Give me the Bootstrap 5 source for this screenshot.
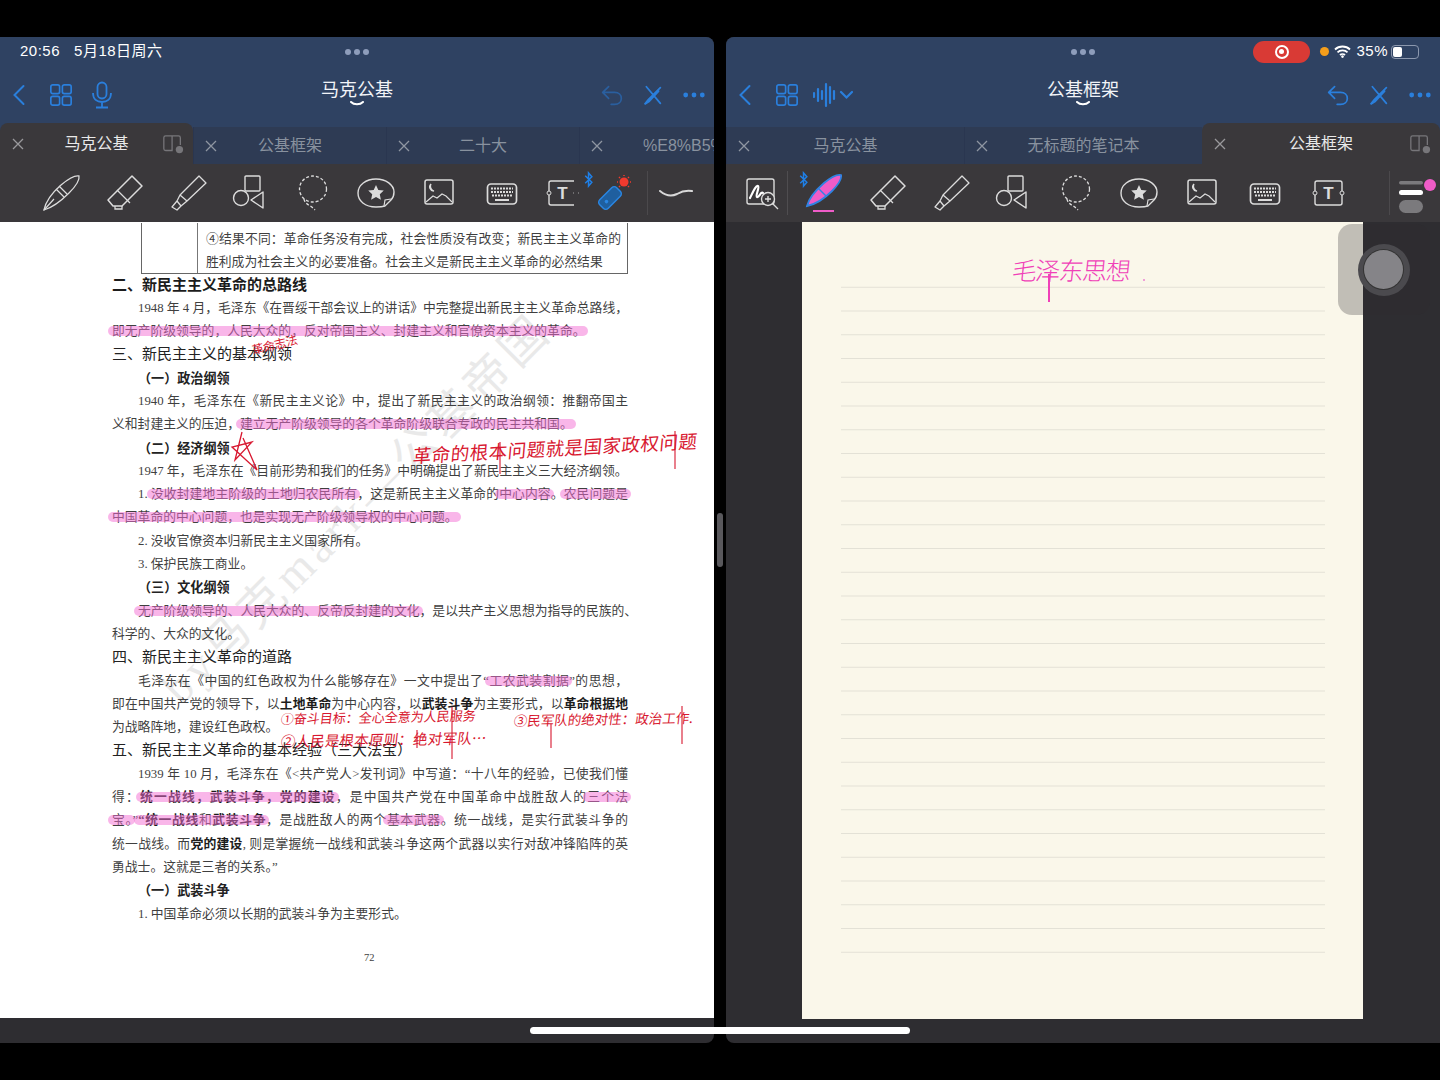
<!DOCTYPE html>
<html lang="zh-CN">
  <head>
    <meta charset="UTF-8" />
    <meta name="viewport" content="width=device-width, initial-scale=1" />
    <link href="https://cdn.jsdelivr.net/npm/bootstrap@5.3.3/dist/css/bootstrap.min.css" rel="stylesheet" />
    <script src="https://cdn.jsdelivr.net/npm/bootstrap@5.3.3/dist/js/bootstrap.bundle.min.js" defer></script>
    <style>
      /* Screen and split panes */
      body {
        background: #000;
        font-family: "Liberation Sans", "Noto Sans CJK SC", sans-serif;
        overflow: hidden;
      }
      .screen { position: relative; width: 1440px; height: 1080px; padding: 37px 0; gap: 12px; }
      .pane { width: 714px; height: 1006px; background: #2e2d31; overflow: hidden; }
      .pane-left { border-radius: 0 8px 8px 0; }
      .pane-right { border-radius: 8px 0 0 8px; }

      /* Navy header */
      .head { background: #2f4262; color: #fff; }
      .status-row { height: 28px; padding: 1px 20px 0; font-size: 15px; letter-spacing: .5px; display: grid; grid-template-columns: 1fr auto 1fr; align-items: center; }
      .dots-top { display: flex; gap: 3px; }
      .dots-top i { width: 6px; height: 6px; border-radius: 50%; background: #8e9dbb; }
      .nav-row { height: 58px; padding: 2px 8px 0; display: grid; grid-template-columns: 1fr auto 1fr; align-items: center; color: #2a7fdc; }
      .doc-title { color: #f2f4f8; font-size: 18px; line-height: 20px; text-align: center; margin-top: -3px; }
      .doc-title svg { display: block; margin: 1px auto 0; }
      .nav-group { display: flex; align-items: center; }
      .dim-blue { color: #2a5f9f; }

      /* Tabs */
      .tab-row { height: 41px; display: flex; }
      .pad-tab { position: relative; flex: none; margin-top: 4px; background: #2e3b54; color: #89929f; font-size: 16px; line-height: 37px; text-align: center; white-space: nowrap; overflow: hidden; border-left: 1px solid #2a3650; }
      .pad-tab.is-on { margin-top: 0; line-height: 41px; background: #3a383b; color: #e9e9e9; border: 0; border-radius: 8px 8px 0 0; }
      .tab-x { position: absolute; left: 11px; top: 50%; margin-top: -6px; width: 12px; height: 12px; color: #8f96a2; display: block; }
      .is-on .tab-x { left: 12px; color: #9a999c; }
      .tab-split { position: absolute; right: 9px; top: 11px; color: #77767a; }

      /* Tool bar */
      .tools { height: 58px; background: #3a383b; color: #dcdcdc; display: flex; align-items: center; position: relative; overflow: hidden; }
      .tool { flex: none; width: 40px; height: 40px; margin-right: 23px; }
      .tool-sep { flex: none; width: 1px; height: 44px; background: #4b494c; }
      .ble { position: absolute; color: #1f7fe6; }

      /* PDF page */
      .page-sheet { position: relative; height: 796px; background: #fff; overflow: hidden; padding: 1px 0 0 112px; font-family: "Liberation Serif", "Noto Sans CJK SC", serif; font-size: 12.8px; color: #3f3f3f; }
      .ln { width: 516px; height: 23.3px; line-height: 23.3px; white-space: nowrap; text-align: justify; text-align-last: justify; }
      .ln.last { text-align: left; text-align-last: left; }
      .ln.ind { padding-left: 26px; }
      .ln.sec-a { font-size: 15px; color: #222; }
      .ln.sec-b { padding-left: 26px; font-size: 13.1px; font-weight: 700; color: #222; }
      .ln b { color: #1c1c1c; }
      .hl { position: relative; }
      .hl::before { content: ""; position: absolute; left: -4px; right: -3px; top: 2px; bottom: 2px; border-radius: 7px; background: rgba(243, 110, 212, .5); }
      .old-table { margin-left: 29px; width: 487px; height: 50.500px; display: flex; border: 1px solid #666; border-top: 0; }
      .old-table > div:first-child { width: 56px; border-right: 1px solid #777; flex: none; }
      .old-cell { padding: 5px 6px 0 8px; flex: 1; min-width: 0; }
      .old-cell .ln { width: 100%; height: 23px; line-height: 23px; }
      .page-no { margin-top: 24px; width: 516px; padding-left: 252px; font-size: 10.500px; }
      .water { position: absolute; left: 57px; top: 262px; width: 600px; text-align: center; font-size: 46px; line-height: 50px; letter-spacing: 5px; color: #e9e9e9; transform: rotate(-45deg); white-space: nowrap; }
      .ink { position: absolute; color: #d81830; white-space: nowrap; font-family: "Noto Sans CJK SC", sans-serif; font-weight: 400; line-height: 1; transform-origin: left center; }
      .ink-a { left: 252px; top: 122px; font-size: 12px; letter-spacing: -.5px; transform: rotate(-14deg); }
      .ink-b { left: 413px; top: 224px; font-size: 18.5px; letter-spacing: .5px; transform: rotate(-3deg) skewX(-8deg); }
      .ink-c { left: 281px; top: 490px; font-size: 13px; transform: rotate(-1deg) skewX(-8deg); }
      .ink-d { left: 281px; top: 512px; font-size: 14.5px; letter-spacing: .2px; transform: rotate(-1deg) skewX(-8deg); }
      .ink-e { left: 514px; top: 492px; font-size: 13.5px; transform: rotate(-1deg) skewX(-8deg); }
      .ink-mark { position: absolute; color: #d81830; fill: none; stroke: currentColor; }

      /* Ruled paper */
      .paper-zone { height: 797px; padding-left: 76px; }
      .paper { position: relative; width: 561px; height: 797px; background: #faf7ea; padding: 42px 38px 0 39px; }
      .rules { height: 689px; background: linear-gradient(to bottom, transparent 23px, #e3e1d6 23px) 0 0 / 100% 23.75px; }
      .pink-ink { position: absolute; left: 210px; top: 35px; color: #f040b8; font-family: "Noto Sans CJK SC", sans-serif; font-weight: 300; font-size: 25px; line-height: 1; letter-spacing: -1.500px; transform: skewX(-6deg); white-space: nowrap; }
      .pink-dot { position: absolute; left: 341px; top: 57px; width: 2px; height: 2px; background: #f0a0d8; }
      .pink-stem { position: absolute; left: 246px; top: 52px; width: 1.500px; height: 28px; background: #f040b8; }

      /* Things over the panes */
      .touch-pad { position: absolute; left: 1338px; top: 224px; width: 92px; height: 91px; border-radius: 14px; background: rgba(45, 44, 48, .28); display: flex; align-items: center; justify-content: center; }
      .touch-ring { width: 52px; height: 52px; border-radius: 50%; background: #4b4a4e; display: flex; align-items: center; justify-content: center; margin-left: -1px; }
      .touch-knob { width: 39px; height: 39px; border-radius: 50%; background: #858488; box-shadow: 0 0 0 1px #333; }
      .split-grip { position: absolute; left: 717px; top: 513px; width: 6px; height: 54px; border-radius: 3px; background: #59585c; }
      .home-bar { position: absolute; left: 530px; top: 1027px; width: 380px; height: 7px; border-radius: 4px; background: #fff; }
      .rec-pill { width: 57px; height: 22px; border-radius: 11px; background: #d93a35; display: flex; align-items: center; justify-content: center; }
      .rec-pill i { width: 14px; height: 14px; border-radius: 50%; border: 2px solid #fff; display: flex; align-items: center; justify-content: center; }
      .rec-pill i::after { content: ""; width: 5px; height: 5px; border-radius: 50%; background: #fff; }
      .orange-dot { width: 9px; height: 9px; border-radius: 50%; background: #f59e1b; margin-left: 10px; }
      .batt { width: 28px; height: 14px; border: 1px solid #8c98ae; border-radius: 4px; padding: 1px; margin-left: 3px; margin-right: 1px; }
      .batt i { display: block; width: 9px; height: 100%; background: #fff; border-radius: 2px; }
    </style>
  </head>

  <body>
    <svg width="0" height="0" style="position:absolute">
      <defs>
        <symbol id="i-pen" viewBox="0 0 40 40"><path d="M3 37C5 27 12 19 20 12 26 7 33 2 38 3c1 5-4 11-10 17C21 27 13 34 3 37Z" fill="none" stroke="currentColor" stroke-width="1.3"/><path d="M15 16l8 8M18 13l8 8M3 37l10-11" fill="none" stroke="currentColor" stroke-width="1.2"/></symbol>
        <symbol id="i-eraser" viewBox="0 0 40 40"><path d="M28 3l10 10-20 20H9l-5-6Z" fill="none" stroke="currentColor" stroke-width="1.5" stroke-linejoin="round"/><path d="M13 17l13 13M11 33v3h7v-3" fill="none" stroke="currentColor" stroke-width="1.3"/></symbol>
        <symbol id="i-mark" viewBox="0 0 40 40"><path d="M32 3l7 7-19 18-7-6ZM13 22l-3 6 4 5 6-5M10 28l-5 6 5 3 4-4" fill="none" stroke="currentColor" stroke-width="1.3" stroke-linejoin="round"/></symbol>
        <symbol id="i-shapes" viewBox="0 0 40 40"><rect x="15" y="3" width="15" height="15" rx="1" fill="none" stroke="currentColor" stroke-width="1.4"/><circle cx="11" cy="25" r="7.5" fill="none" stroke="currentColor" stroke-width="1.4"/><path d="M33 19v16l-12-8Z" fill="none" stroke="currentColor" stroke-width="1.4" stroke-linejoin="round"/></symbol>
        <symbol id="i-lasso" viewBox="0 0 40 40"><ellipse cx="20" cy="16" rx="13.5" ry="13" fill="none" stroke="currentColor" stroke-width="1.3" stroke-dasharray="3 2"/><path d="M11 26c1 6 7 6 11 11" fill="none" stroke="currentColor" stroke-width="1.3" stroke-dasharray="3 2"/></symbol>
        <symbol id="i-sticker" viewBox="0 0 40 40"><path d="M20 6c10 0 18 6 18 13 0 3-1 6-3 8l-6 6c-3 1-6 1-9 1C9 34 2 28 2 20S10 6 20 6Z" fill="none" stroke="currentColor" stroke-width="1.4"/><path d="M35 26l-6 1-1 6" fill="none" stroke="currentColor" stroke-width="1.2"/><path d="M20 12l2.300 5 5.500.6-4 3.700 1.100 5.400-4.900-2.800-4.900 2.800 1.100-5.400-4-3.700 5.500-.6Z" fill="currentColor"/></symbol>
        <symbol id="i-image" viewBox="0 0 40 40"><rect x="6" y="7" width="28" height="24" rx="2" fill="none" stroke="currentColor" stroke-width="1.5"/><path d="M12 11a4 4 0 0 0 3 7 5 5 0 0 1-3-7ZM7 29l7-6 4 2 5-4 4 2 6 6" fill="none" stroke="currentColor" stroke-width="1.200"/></symbol>
        <symbol id="i-keys" viewBox="0 0 40 40"><rect x="5.500" y="11" width="29" height="20" rx="3.500" fill="none" stroke="currentColor" stroke-width="1.700"/><path d="M9 15.500h22M9 19h22M10 22.500h20" stroke="currentColor" stroke-width="2" stroke-dasharray="2 1"/><path d="M13 27h14" stroke="currentColor" stroke-width="2"/></symbol>
        <symbol id="i-text" viewBox="0 0 40 40"><rect x="7" y="8" width="27" height="24" rx="2" fill="none" stroke="currentColor" stroke-width="1.400"/><circle cx="7" cy="20" r="2" fill="#3a383b" stroke="currentColor"/><circle cx="34" cy="20" r="2" fill="#3a383b" stroke="currentColor"/><text x="20.500" y="26" font-family="Liberation Sans" font-weight="700" font-size="17" fill="currentColor" text-anchor="middle">T</text></symbol>
        <symbol id="i-back" viewBox="0 0 20 28"><path d="M15 4L5 14l10 10" fill="none" stroke="currentColor" stroke-width="2.200" stroke-linecap="round"/></symbol>
        <symbol id="i-grid" viewBox="0 0 26 26"><g fill="none" stroke="currentColor" stroke-width="1.800"><rect x="2" y="2" width="9.500" height="9.500" rx="2"/><rect x="14.500" y="2" width="9.500" height="9.500" rx="2"/><rect x="2" y="14.500" width="9.500" height="9.500" rx="2"/><rect x="14.500" y="14.500" width="9.500" height="9.500" rx="2"/></g></symbol>
        <symbol id="i-undo" viewBox="0 0 28 26"><path d="M10 3L3 10l7 7M3 10h14c5 0 8 3 8 7s-3 7-8 7h-4" fill="none" stroke="currentColor" stroke-width="2" stroke-linecap="round" stroke-linejoin="round"/></symbol>
        <symbol id="i-cross" viewBox="0 0 24 24"><path d="M5 2l16 19M21 3L7 17l-4 5 5-3L19 7" fill="none" stroke="currentColor" stroke-width="2" stroke-linecap="round"/></symbol>
        <symbol id="i-more" viewBox="0 0 26 8"><circle cx="4" cy="4" r="2.600" fill="currentColor"/><circle cx="13" cy="4" r="2.600" fill="currentColor"/><circle cx="22" cy="4" r="2.600" fill="currentColor"/></symbol>
        <symbol id="i-x" viewBox="0 0 12 12"><path d="M1 1l10 10M11 1L1 11" stroke="currentColor" stroke-width="1.300"/></symbol>
        <symbol id="i-split" viewBox="0 0 24 24"><path d="M11 2H4a2 2 0 0 0-2 2v12a2 2 0 0 0 2 2h7ZM11 2h7a2 2 0 0 1 2 2v8" fill="none" stroke="currentColor" stroke-width="1.400"/><circle cx="19" cy="17" r="4" fill="currentColor"/></symbol>
        <symbol id="i-chev" viewBox="0 0 14 6"><path d="M1 1c3 3 9 3 12 0" fill="none" stroke="currentColor" stroke-width="2" stroke-linecap="round"/></symbol>
        <symbol id="i-ble" viewBox="0 0 10 18"><path d="M1 5l7 7-3.500 4V2L8 6l-7 7" fill="none" stroke="currentColor" stroke-width="1.600"/></symbol>
      </defs>
    </svg>

    <div class="screen d-flex">
      <!-- left pane: PDF -->
      <section class="pane pane-left">
        <div class="head">
          <div class="status-row">
            <div>20:56&nbsp;&nbsp;&nbsp;5月18日周六</div>
            <div class="dots-top"><i></i><i></i><i></i></div>
            <div></div>
          </div>
          <div class="nav-row">
            <div class="nav-group">
              <svg width="18" height="26" style="margin-left:2px"><use href="#i-back"/></svg>
              <svg width="24" height="24" style="margin-left:21px"><use href="#i-grid"/></svg>
              <svg width="24" height="28" viewBox="0 0 24 28" style="margin-left:17px"><rect x="7.500" y="1.500" width="9" height="16" rx="4.500" fill="none" stroke="currentColor" stroke-width="1.800"/><path d="M3 12c0 6 4 9 9 9s9-3 9-9M12 21v5M6 26.500h12" fill="none" stroke="currentColor" stroke-width="1.800"/></svg>
            </div>
            <div class="doc-title">马克公基<svg width="14" height="6" class="text-white"><use href="#i-chev"/></svg></div>
            <div class="nav-group justify-content-end">
              <svg width="24" height="22" class="dim-blue"><use href="#i-undo"/></svg>
              <svg width="21" height="21" style="margin-left:18px"><use href="#i-cross"/></svg>
              <svg width="24" height="8" style="margin-left:19px"><use href="#i-more"/></svg>
            </div>
          </div>
          <div class="tab-row">
            <div class="pad-tab is-on" style="width:193px"><svg class="tab-x"><use href="#i-x"/></svg>马克公基<svg class="tab-split" width="22" height="22"><use href="#i-split"/></svg></div>
            <div class="pad-tab" style="width:193px"><svg class="tab-x"><use href="#i-x"/></svg>公基框架</div>
            <div class="pad-tab" style="width:193px"><svg class="tab-x"><use href="#i-x"/></svg>二十大</div>
            <div class="pad-tab" style="width:135px;padding-left:63px;text-align:left"><svg class="tab-x"><use href="#i-x"/></svg>%E8%B5%84</div>
          </div>
        </div>
        <div class="tools" style="padding-left:41px">
          <svg class="tool"><use href="#i-pen"/></svg>
          <svg class="tool"><use href="#i-eraser"/></svg>
          <svg class="tool"><use href="#i-mark"/></svg>
          <svg class="tool"><use href="#i-shapes"/></svg>
          <svg class="tool"><use href="#i-lasso"/></svg>
          <svg class="tool"><use href="#i-sticker"/></svg>
          <svg class="tool"><use href="#i-image"/></svg>
          <svg class="tool"><use href="#i-keys"/></svg>
          <svg class="tool" style="margin-right:-8px;margin-left:-3px"><use href="#i-text"/></svg>
          <div class="tool-sep" style="background:#3a383b;width:4px;position:relative"></div>
          <svg class="ble" width="10" height="17" style="left:584px;top:7px"><use href="#i-ble"/></svg>
          <svg width="36" height="36" viewBox="0 0 36 36" style="margin-left:18px;flex:none">
            <g transform="rotate(-45 14 23)"><rect x="2" y="17" width="24" height="12" rx="3.500" fill="#1f5f9f" stroke="#2a86e2" stroke-width="1.500"/><circle cx="9" cy="23" r="1.800" fill="#2a86e2"/></g>
            <circle cx="28" cy="7" r="4.500" fill="#f03a2e"/>
            <path d="M28 0v1M21 7h1M34 7h1M23 2l1 1M33 2l-1 1M23 12l1-1M33 12l-1-1" stroke="#f03a2e" stroke-width="1.500"/>
          </svg>
          <div class="tool-sep" style="margin-left:15px"></div>
          <svg width="34" height="10" viewBox="0 0 34 10" style="margin-left:11px;flex:none"><path d="M1 3c6 5 11 6 17 3 5-3 9-4 15-3" fill="none" stroke="#d8d8d8" stroke-width="2" stroke-linecap="round"/></svg>
        </div>
        <div class="page-sheet">
          <div class="water">by马克mark—公基帝国</div>
          <div style="position:relative">
            <div class="old-table">
              <div></div>
              <div class="old-cell">
                <div class="ln">④结果不同：革命任务没有完成，社会性质没有改变；新民主主义革命的</div>
                <div class="ln last">胜利成为社会主义的必要准备。社会主义是新民主主义革命的必然结果</div>
              </div>
            </div>
            <div class="ln sec-a last"><b>二、新民主主义革命的总路线</b></div>
            <div class="ln ind">1948 年 4 月，毛泽东《在晋绥干部会议上的讲话》中完整提出新民主主义革命总路线，</div>
            <div class="ln last"><span class="hl">即无产阶级领导的，人民大众的，反对帝国主义、封建主义和官僚资本主义的革命。</span></div>
            <div class="ln sec-a last">三、新民主主义的基本纲领</div>
            <div class="ln sec-b last">（一）政治纲领</div>
            <div class="ln ind">1940 年，毛泽东在《新民主主义论》中，提出了新民主主义的政治纲领：推翻帝国主</div>
            <div class="ln last">义和封建主义的压迫，<span class="hl">建立无产阶级领导的各个革命阶级联合专政的民主共和国。</span></div>
            <div class="ln sec-b last">（二）经济纲领</div>
            <div class="ln ind last">1947 年，毛泽东在《目前形势和我们的任务》中明确提出了新民主主义三大经济纲领。</div>
            <div class="ln ind">1. <span class="hl">没收封建地主阶级的土地归农民所有</span>，这是新民主主义革命的<span class="hl">中心内容</span>。<span class="hl">农民问题是</span></div>
            <div class="ln last"><span class="hl">中国革命的中心问题，也是实现无产阶级领导权的中心问题。</span></div>
            <div class="ln ind last">2. 没收官僚资本归新民主主义国家所有。</div>
            <div class="ln ind last">3. 保护民族工商业。</div>
            <div class="ln sec-b last">（三）文化纲领</div>
            <div class="ln ind last"><span class="hl">无产阶级领导的、人民大众的、反帝反封建的文化</span>，是以共产主义思想为指导的民族的、</div>
            <div class="ln last">科学的、大众的文化。</div>
            <div class="ln sec-a last">四、新民主主义革命的道路</div>
            <div class="ln ind">毛泽东在《中国的红色政权为什么能够存在》一文中提出了“<span class="hl">工农武装割据</span>”的思想，</div>
            <div class="ln">即在中国共产党的领导下，以<b>土地革命</b>为中心内容，以<b>武装斗争</b>为主要形式，以<b>革命根据地</b></div>
            <div class="ln last">为战略阵地，建设红色政权。</div>
            <div class="ln sec-a last">五、新民主主义革命的基本经验（三大法宝）</div>
            <div class="ln ind">1939 年 10 月，毛泽东在《&lt;共产党人&gt;发刊词》中写道：“十八年的经验，已使我们懂</div>
            <div class="ln">得：<span class="hl"><b>统一战线，武装斗争，党的建设</b></span>，是中国共产党在中国革命中战胜敌人的<span class="hl">三个法</span></div>
            <div class="ln"><span class="hl">宝。</span>”<span class="hl"><b>“统一战线</b>和<b>武装斗争</b></span>，是战胜敌人的两个<span class="hl">基本武器</span>。统一战线，是实行武装斗争的</div>
            <div class="ln">统一战线。而<b>党的建设</b>, 则是掌握统一战线和武装斗争这两个武器以实行对敌冲锋陷阵的英</div>
            <div class="ln last">勇战士。这就是三者的关系。”</div>
            <div class="ln sec-b last">（一）武装斗争</div>
            <div class="ln ind last">1. 中国革命必须以长期的武装斗争为主要形式。</div>
            <div class="page-no">72</div>
          </div>
          <span class="ink ink-a">革命志法</span>
          <span class="ink ink-b">革命的根本问题就是国家政权问题</span>
          <span class="ink ink-c">①奋斗目标：全心全意为人民服务</span>
          <span class="ink ink-d">②人民是根本原则：绝对军队…</span>
          <span class="ink ink-e">③民军队的绝对性：政治工作.</span>
          <svg class="ink-mark" style="left:230px;top:208px" width="32" height="42" viewBox="0 0 32 42" stroke-width="1.300"><path d="M12 2L5 30 22 12 2 17 27 40 13 8"/></svg>
          <svg class="ink-mark" style="left:470px;top:205px" width="230" height="50" viewBox="0 0 230 50" stroke-width="1.100"><path d="M30 15v32M205 4v38"/></svg>
          <svg class="ink-mark" style="left:410px;top:480px" width="290" height="70" viewBox="0 0 290 70" stroke-width="1.100"><path d="M42 5v52M7 28v18M141 22v24M272 4v38"/></svg>
        </div>
      </section>

      <!-- right pane: notebook -->
      <section class="pane pane-right">
        <div class="head">
          <div class="status-row">
            <div></div>
            <div class="dots-top"><i></i><i></i><i></i></div>
            <div class="d-flex align-items-center justify-content-end">
              <div class="rec-pill"><i></i></div>
              <div class="orange-dot"></div>
              <svg width="17" height="13" viewBox="0 0 17 13" style="margin-left:5px"><path d="M1 4.500c4-4 11-4 15 0M3.500 7.300c2.500-2.500 7.500-2.500 10 0M6 10c1.300-1.200 3.700-1.200 5 0" fill="none" stroke="#fff" stroke-width="1.800"/><circle cx="8.500" cy="11.600" r="1.300" fill="#fff"/></svg>
              <span style="margin-left:5px">35%</span>
              <div class="batt"><i></i></div>
            </div>
          </div>
          <div class="nav-row">
            <div class="nav-group">
              <svg width="18" height="26" style="margin-left:2px"><use href="#i-back"/></svg>
              <svg width="24" height="24" style="margin-left:21px"><use href="#i-grid"/></svg>
              <svg width="40" height="26" viewBox="0 0 40 26" style="margin-left:14px"><path d="M1 11v4M5 7v12M9 9v8M13 2v22M17 5v16M21 9v8" stroke="currentColor" stroke-width="2.200" stroke-linecap="round"/><path d="M28 10l5.500 5.500L39 10" fill="none" stroke="currentColor" stroke-width="2.200" stroke-linecap="round"/></svg>
            </div>
            <div class="doc-title">公基框架<svg width="14" height="6" class="text-white"><use href="#i-chev"/></svg></div>
            <div class="nav-group justify-content-end">
              <svg width="24" height="22"><use href="#i-undo"/></svg>
              <svg width="21" height="21" style="margin-left:18px"><use href="#i-cross"/></svg>
              <svg width="24" height="8" style="margin-left:19px"><use href="#i-more"/></svg>
            </div>
          </div>
          <div class="tab-row">
            <div class="pad-tab" style="width:238px"><svg class="tab-x"><use href="#i-x"/></svg>马克公基</div>
            <div class="pad-tab" style="width:238px"><svg class="tab-x"><use href="#i-x"/></svg>无标题的笔记本</div>
            <div class="pad-tab is-on" style="width:238px"><svg class="tab-x"><use href="#i-x"/></svg>公基框架<svg class="tab-split" width="22" height="22"><use href="#i-split"/></svg></div>
          </div>
        </div>
        <div class="tools" style="padding-left:16px">
          <svg width="40" height="40" viewBox="0 0 40 40" style="flex:none"><rect x="5" y="6" width="27" height="25" rx="2" fill="none" stroke="currentColor" stroke-width="1.400"/><path d="M8 25c3-6 6-13 8-12s-3 10-1 11 4-6 6-4" fill="none" stroke="#fff" stroke-width="2.200" stroke-linecap="round"/><circle cx="26" cy="26" r="6.500" fill="#3a383b" stroke="currentColor" stroke-width="1.400"/><path d="M23 26h6M26 23v6M31 31l5 5" stroke="currentColor" stroke-width="1.400"/></svg>
          <div class="tool-sep" style="margin-left:5px;background:#4f4d50"></div>
          <svg class="ble" width="10" height="17" style="left:73px;top:7px"><use href="#i-ble"/></svg>
          <svg width="40" height="40" viewBox="0 0 40 40" style="margin-left:16px;flex:none"><path d="M3 33C5 25 12 17 20 10 26 5 33 1 37 2c1 4-3 10-9 16C21 25 13 31 3 33Z" fill="#ef5cc8" stroke="#2f83e2" stroke-width="1.800"/><path d="M14 15l8 8" stroke="#2f83e2" stroke-width="1.400"/><path d="M9 38h21" stroke="#ef5cc8" stroke-width="2"/></svg>
          <svg class="tool" style="margin-left:23px"><use href="#i-eraser"/></svg>
          <svg class="tool"><use href="#i-mark"/></svg>
          <svg class="tool"><use href="#i-shapes"/></svg>
          <svg class="tool"><use href="#i-lasso"/></svg>
          <svg class="tool"><use href="#i-sticker"/></svg>
          <svg class="tool"><use href="#i-image"/></svg>
          <svg class="tool"><use href="#i-keys"/></svg>
          <svg class="tool" style="margin-right:0"><use href="#i-text"/></svg>
          <div class="tool-sep" style="margin-left:41px"></div>
          <svg width="40" height="44" viewBox="0 0 40 44" style="margin-left:6px;flex:none"><rect x="3" y="10" width="24" height="3.500" rx="1.700" fill="#7b7a7d"/><rect x="3" y="19" width="24" height="5" rx="2.500" fill="#fff"/><rect x="3" y="29" width="24" height="13" rx="6.500" fill="#7b7a7d"/><circle cx="34" cy="14" r="6" fill="#f05cc8"/></svg>
        </div>
        <div class="paper-zone">
          <div class="paper">
            <div class="rules"></div>
            <span class="pink-ink">毛泽东思想</span>
            <i class="pink-stem"></i>
            <i class="pink-dot"></i>
          </div>
        </div>
      </section>

      <div class="touch-pad"><div class="touch-ring"><div class="touch-knob"></div></div></div>
      <div class="split-grip"></div>
      <div class="home-bar"></div>
    </div>
  </body>
</html>
